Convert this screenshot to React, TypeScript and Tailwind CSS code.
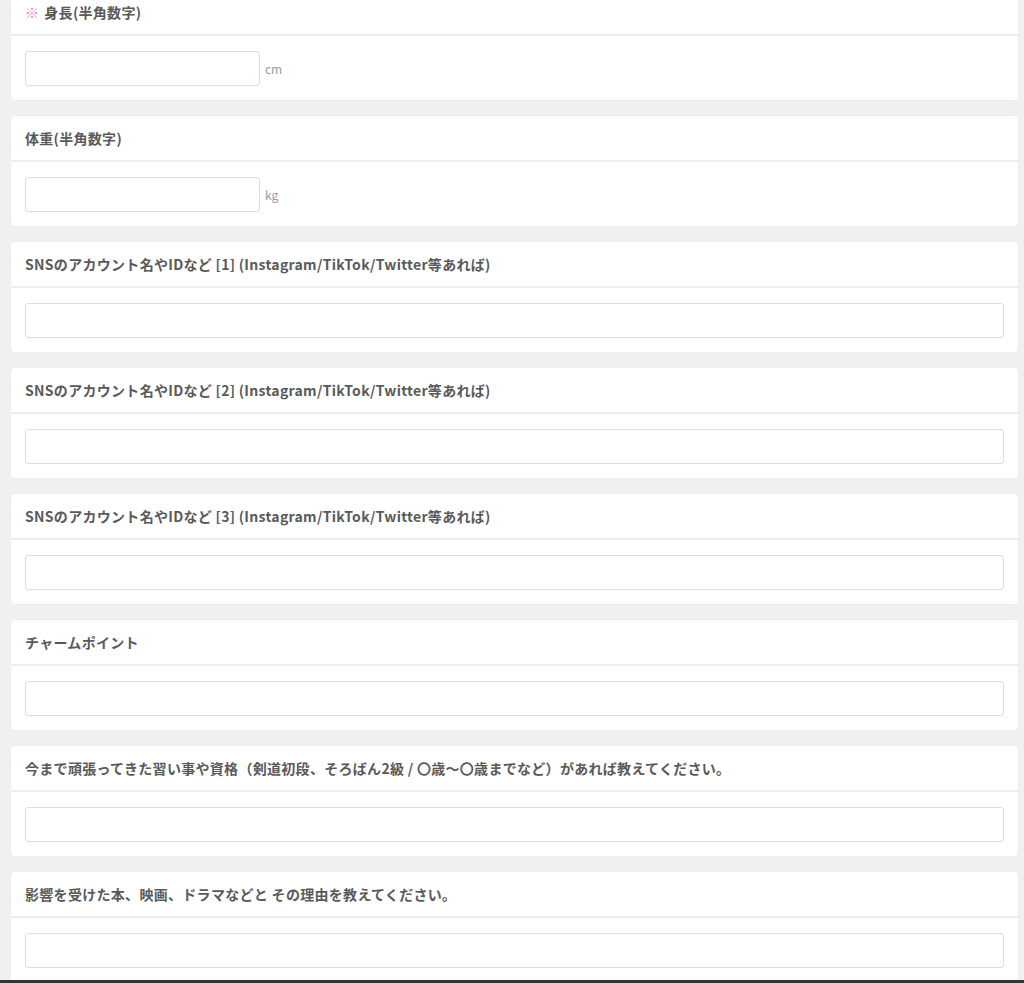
import React from 'react';

interface Field {
  label: string;
  required?: boolean;
  unit?: string;
}

const FIELDS: Field[] = [
  { label: '身長(半角数字)', required: true, unit: 'cm' },
  { label: '体重(半角数字)', unit: 'kg' },
  { label: 'SNSのアカウント名やIDなど [1] (Instagram/TikTok/Twitter等あれば)' },
  { label: 'SNSのアカウント名やIDなど [2] (Instagram/TikTok/Twitter等あれば)' },
  { label: 'SNSのアカウント名やIDなど [3] (Instagram/TikTok/Twitter等あれば)' },
  { label: 'チャームポイント' },
  { label: '今まで頑張ってきた習い事や資格（剣道初段、そろばん2級 / 〇歳〜〇歳までなど）があれば教えてください。' },
  { label: '影響を受けた本、映画、ドラマなどと その理由を教えてください。' },
];

const FieldCard: React.FC<{ field: Field }> = ({ field }) => (
  <div className="bg-white rounded-[4px] shadow-[0_0_2px_rgba(0,0,0,0.04)]">
    <div className="h-[46px] flex items-center px-[14px] border-b-2 border-[#eeeeee]">
      <span className="text-[14px] font-bold text-[#5a5a5a] leading-none tracking-[0.3px]">
        {field.required && <span className="text-[#f28da0] mr-[5px]">※</span>}
        {field.label}
      </span>
    </div>
    <div className="px-[14px] pt-[15px] pb-[14px]">
      {field.unit ? (
        <div className="flex items-center gap-[5px]">
          <input
            type="text"
            className="w-[235px] h-[35px] border border-[#dedede] rounded-[3px] bg-white outline-none px-2"
          />
          <span className="text-[12px] text-[#9a9a9a]">{field.unit}</span>
        </div>
      ) : (
        <input
          type="text"
          className="w-full h-[35px] border border-[#dedede] rounded-[3px] bg-white outline-none px-2 block"
        />
      )}
    </div>
  </div>
);

export default function App() {
  return (
    <div
      className="w-[1024px] h-[983px] flex flex-col bg-[#f0f0f0] overflow-hidden"
      style={{ fontFamily: '"Noto Sans CJK JP", "Noto Sans", sans-serif' }}
    >
      <div className="flex-1 overflow-hidden pl-[11px] pr-[6px]">
        <div className="-mt-[10px] flex flex-col gap-[16px]">
          {FIELDS.map((f, i) => (
            <FieldCard key={i} field={f} />
          ))}
        </div>
      </div>
      <div className="h-[3px] bg-[#333333] shrink-0" />
    </div>
  );
}
